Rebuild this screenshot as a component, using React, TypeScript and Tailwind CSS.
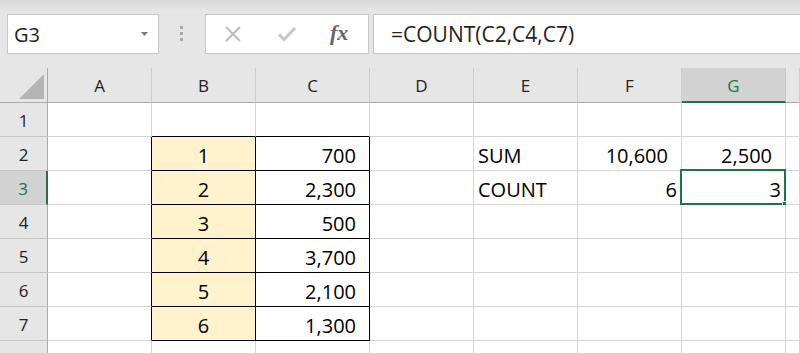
import React from 'react';

const COLS = ['A', 'B', 'C', 'D', 'E', 'F', 'G', 'H'];

type CellVal = { text: string; align?: 'left' | 'right' | 'center'; pad?: 'wide' | 'tight' };

const data: Record<number, Record<string, CellVal>> = {
  2: {
    B: { text: '1', align: 'center' },
    C: { text: '700', align: 'right', pad: 'wide' },
    E: { text: 'SUM', align: 'left' },
    F: { text: '10,600', align: 'right', pad: 'wide' },
    G: { text: '2,500', align: 'right', pad: 'wide' },
  },
  3: {
    B: { text: '2', align: 'center' },
    C: { text: '2,300', align: 'right', pad: 'wide' },
    E: { text: 'COUNT', align: 'left' },
    F: { text: '6', align: 'right', pad: 'tight' },
    G: { text: '3', align: 'right', pad: 'tight' },
  },
  4: { B: { text: '3', align: 'center' }, C: { text: '500', align: 'right', pad: 'wide' } },
  5: { B: { text: '4', align: 'center' }, C: { text: '3,700', align: 'right', pad: 'wide' } },
  6: { B: { text: '5', align: 'center' }, C: { text: '2,100', align: 'right', pad: 'wide' } },
  7: { B: { text: '6', align: 'center' }, C: { text: '1,300', align: 'right', pad: 'wide' } },
};

function Toolbar() {
  return (
    <div className="h-[68px] flex items-start pt-[14px] pl-[7px] bg-linear-to-b from-[#d8d8d8] via-[#e6e6e6] via-[16%] to-[#e6e6e6]">
      {/* name box */}
      <div className="w-[152px] h-[40px] bg-white border border-[#c6c6c6] flex items-center justify-between pl-[6px] pr-[10px]">
        <span className="text-[20px] text-[#222] leading-none pt-[2px]">G3</span>
        <svg width="7" height="4" viewBox="0 0 7 4">
          <polygon points="0,0 7,0 3.5,4" fill="#7a7a7a" />
        </svg>
      </div>
      {/* grip */}
      <div className="ml-[21px] mt-[12px] flex flex-col gap-[3px]">
        <span className="block w-[3px] h-[3px] bg-[#a8a8a8]" />
        <span className="block w-[3px] h-[3px] bg-[#a8a8a8]" />
        <span className="block w-[3px] h-[3px] bg-[#a8a8a8]" />
      </div>
      {/* cancel / enter / fx */}
      <div className="ml-[22px] w-[164px] h-[40px] bg-white border border-[#c6c6c6] flex items-center pl-[18px]">
        <svg width="18" height="16" viewBox="0 0 18 16">
          <path d="M2 1 L16 15 M16 1 L2 15" stroke="#bdbdbd" strokeWidth="2" />
        </svg>
        <svg className="ml-[35px]" width="20" height="16" viewBox="0 0 20 16">
          <path d="M2 8.5 L7 13.5 L18 2" stroke="#c8c8c8" strokeWidth="3" fill="none" />
        </svg>
        <span className="ml-[33px] text-[22px] italic font-bold text-[#666] leading-none font-['Liberation_Serif',serif] pb-[2px]">
          fx
        </span>
      </div>
      {/* formula */}
      <div className="ml-[4px] flex-1 -mr-[4px] h-[40px] bg-white border border-[#c6c6c6] flex items-center pl-[17px]">
        <span className="text-[21px] text-[#222] leading-none">=COUNT(C2,C4,C7)</span>
      </div>
    </div>
  );
}

function ColHeader({ col }: { col: string }) {
  const sel = col === 'G';
  return (
    <div
      className={
        sel
          ? 'h-[35px] flex items-center justify-center bg-[#d2d2d2] border-r border-r-[#c6c6c6] border-b-2 border-b-[#217346] text-[#217346] text-[17px] pt-[3px]'
          : 'h-[35px] flex items-center justify-center bg-[#e6e6e6] border-r border-r-[#cdcdcd] border-b border-b-[#ababab] text-[#222] text-[17px] pt-[2px]'
      }
    >
      {col === 'H' ? '' : col}
    </div>
  );
}

function RowHeader({ row }: { row: number }) {
  const sel = row === 3;
  return (
    <div
      className={
        sel
          ? 'h-[34px] flex items-center justify-center bg-[#d2d2d2] border-r-2 border-r-[#217346] border-b border-b-[#c6c6c6] text-[#217346] text-[17px] pt-[3px]'
          : 'h-[34px] flex items-center justify-center bg-[#e6e6e6] border-r border-r-[#ababab] border-b border-b-[#c6c6c6] text-[#222] text-[17px] pt-[3px]'
      }
    >
      {row}
    </div>
  );
}

function Cell({ row, col }: { row: number; col: string }) {
  const inBox = (col === 'B' || col === 'C') && row >= 2 && row <= 7;
  const blackRight = (col === 'A' || col === 'B' || col === 'C') && row >= 2 && row <= 7;
  const blackBottom = (col === 'B' || col === 'C') && row >= 1 && row <= 7;
  const val = data[row]?.[col];
  const selected = row === 3 && col === 'G';

  const borderR = blackRight ? 'border-r-black' : 'border-r-[#d4d4d4]';
  const borderB = blackBottom ? 'border-b-black' : 'border-b-[#d4d4d4]';
  const bg = inBox && col === 'B' ? 'bg-[#fff2cc]' : 'bg-white';
  let align = 'justify-start pl-[4px]';
  if (val?.align === 'center') align = 'justify-center';
  if (val?.align === 'right') align = val.pad === 'wide' ? 'justify-end pr-[13px]' : 'justify-end pr-[4px]';

  return (
    <div className={`relative h-[34px] border-r border-b ${borderR} ${borderB} ${bg} flex items-center ${align} pt-[5px] text-[20px] text-black whitespace-nowrap`}>
      {val?.text}
      {selected && (
        <>
          <div className="absolute -left-[2px] -top-[2px] -right-[1px] -bottom-[1px] border-2 border-[#217346] pointer-events-none" />
          <div className="absolute -right-[3px] -bottom-[3px] w-[6px] h-[6px] bg-[#217346] border border-white" />
        </>
      )}
    </div>
  );
}

export default function App() {
  const rows = [1, 2, 3, 4, 5, 6, 7, 8];
  return (
    <div className="w-[800px] h-[353px] overflow-hidden bg-white font-['Open_Sans','Noto_Sans',sans-serif]">
      <Toolbar />
      <div className="grid grid-cols-[48px_104px_104px_114px_104px_104px_104px_104px_1fr]">
        <div className="relative h-[35px] bg-[#e6e6e6] border-r border-r-[#ababab] border-b border-b-[#ababab]">
          <svg className="absolute right-[3px] bottom-[3px]" width="25" height="25" viewBox="0 0 25 25">
            <polygon points="25,0 25,25 0,25" fill="#b5b5b5" />
          </svg>
        </div>
        {COLS.map(c => (
          <ColHeader key={c} col={c} />
        ))}
        {rows.map(r => (
          <React.Fragment key={r}>
            <RowHeader row={r} />
            {COLS.map(c => (
              <Cell key={c} row={r} col={c} />
            ))}
          </React.Fragment>
        ))}
      </div>
    </div>
  );
}
